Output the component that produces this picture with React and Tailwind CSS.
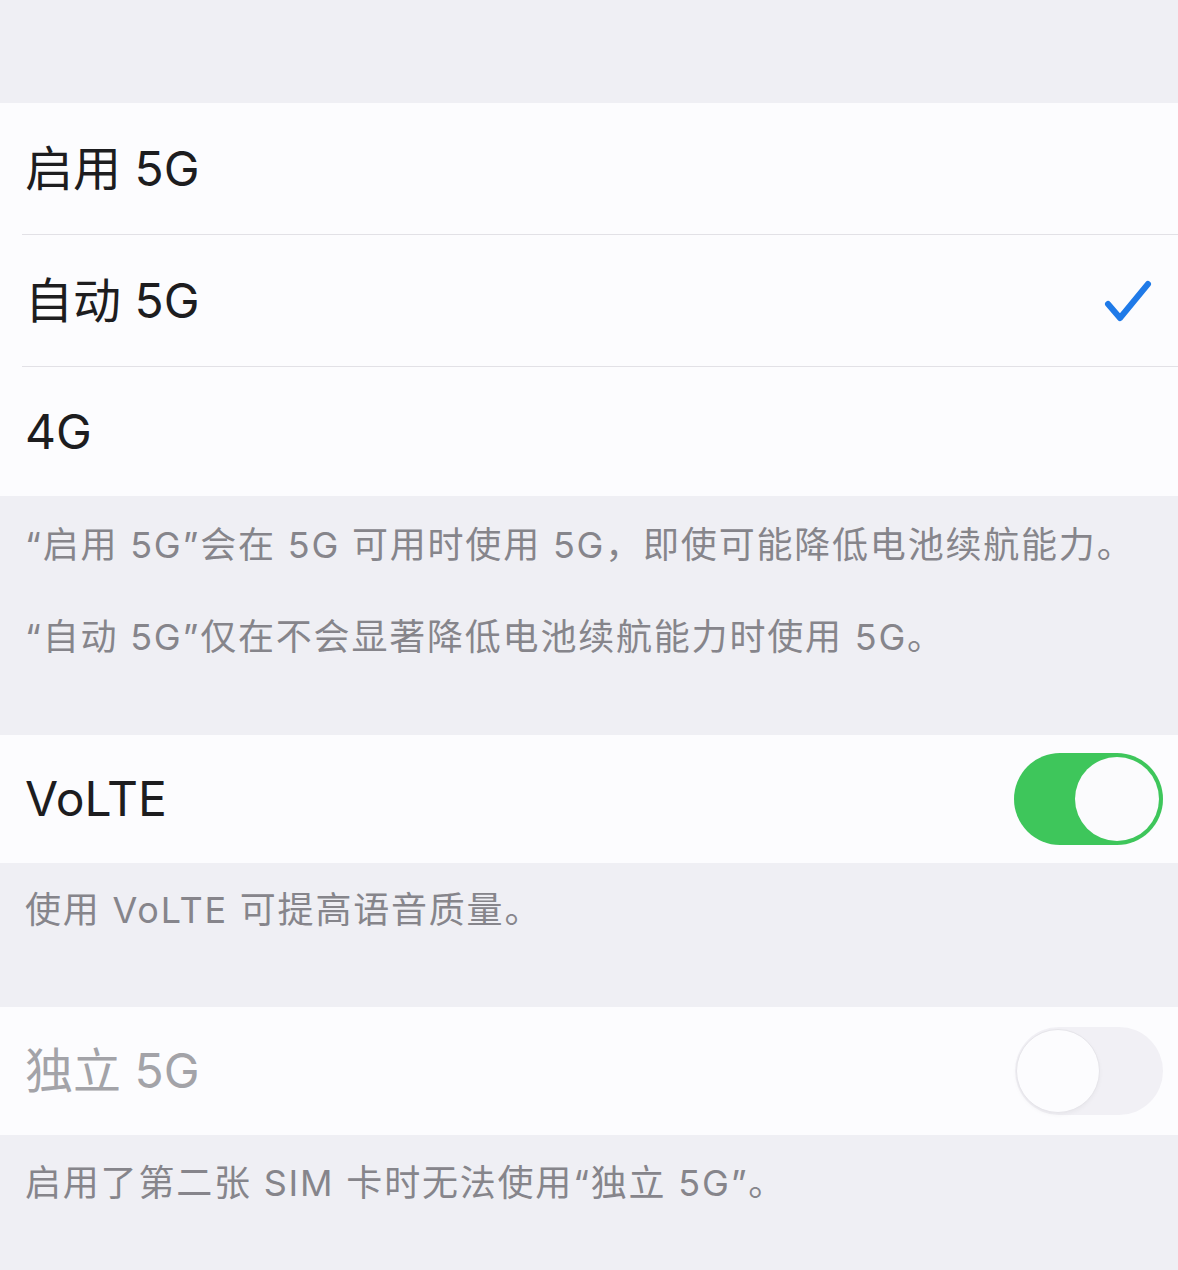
import React from "react";

const font = { fontFamily: '"Inter", "Noto Sans CJK SC", sans-serif' };

function Check() {
  return (
    <svg width="48" height="44" viewBox="0 0 48 44" fill="none">
      <path d="M4 25 L16 39 L44 5" stroke="#1f7ae8" strokeWidth="6" strokeLinecap="round" strokeLinejoin="round" />
    </svg>
  );
}

function Toggle({ on }) {
  if (on) {
    return (
      <div className="w-[149px] h-[92px] rounded-full bg-[#3ec65b] flex items-center justify-end pr-[4px]">
        <div className="w-[84px] h-[84px] rounded-full bg-[#fbfbfd]" />
      </div>
    );
  }
  return (
    <div className="w-[148px] h-[88px] rounded-full bg-[#f1f0f5] flex items-center pl-[1px]">
      <div className="w-[84px] h-[84px] rounded-full bg-[#fcfcfe] border border-[#e6e5ea] shadow-[0_2px_4px_rgba(0,0,0,0.04)]" />
    </div>
  );
}

function Divider() {
  return (
    <div className="bg-[#fcfcfe] pl-[22px]">
      <div className="h-px bg-[#e2e1e6]" />
    </div>
  );
}

export default function App() {
  return (
    <div className="w-[1178px] h-[1270px] bg-[#efeff4] overflow-hidden flex flex-col" style={font}>
      <div className="h-[103px] shrink-0" />
      <div className="bg-[#fcfcfe] h-[131px] shrink-0 flex items-center pl-[25px]">
        <span className="text-[48px] leading-none text-[#1d1d1f]">启用 5G</span>
      </div>
      <Divider />
      <div className="bg-[#fcfcfe] h-[131px] shrink-0 flex items-center justify-between pl-[25px] pr-[26px]">
        <span className="text-[48px] leading-none text-[#1d1d1f]">自动 5G</span>
        <Check />
      </div>
      <Divider />
      <div className="bg-[#fcfcfe] h-[129px] shrink-0 flex items-center pl-[25px]">
        <span className="text-[48px] leading-none text-[#1d1d1f]">4G</span>
      </div>
      <div className="h-[239px] shrink-0 flex flex-col pl-[25px] pt-[30px] gap-[54px] text-[36px] leading-[38px] tracking-[1.8px] text-[#86858b]">
        <p>“启用 5G”会在 5G 可用时使用 5G，即使可能降低电池续航能力。</p>
        <p>“自动 5G”仅在不会显著降低电池续航能力时使用 5G。</p>
      </div>
      <div className="bg-[#fcfcfe] h-[128px] shrink-0 flex items-center justify-between pl-[25px] pr-[15px]">
        <span className="text-[48px] leading-none text-[#1d1d1f]">VoLTE</span>
        <Toggle on />
      </div>
      <div className="h-[144px] shrink-0 pl-[25px] pt-[28px] text-[36px] leading-[38px] tracking-[1.8px] text-[#86858b]">
        <p>使用 VoLTE 可提高语音质量。</p>
      </div>
      <div className="bg-[#fcfcfe] h-[128px] shrink-0 flex items-center justify-between pl-[25px] pr-[15px]">
        <span className="text-[48px] leading-none text-[#a3a3a8]">独立 5G</span>
        <Toggle />
      </div>
      <div className="pl-[25px] pt-[29px] text-[36px] leading-[38px] tracking-[1.8px] text-[#86858b]">
        <p>启用了第二张 SIM 卡时无法使用“独立 5G”。</p>
      </div>
    </div>
  );
}
